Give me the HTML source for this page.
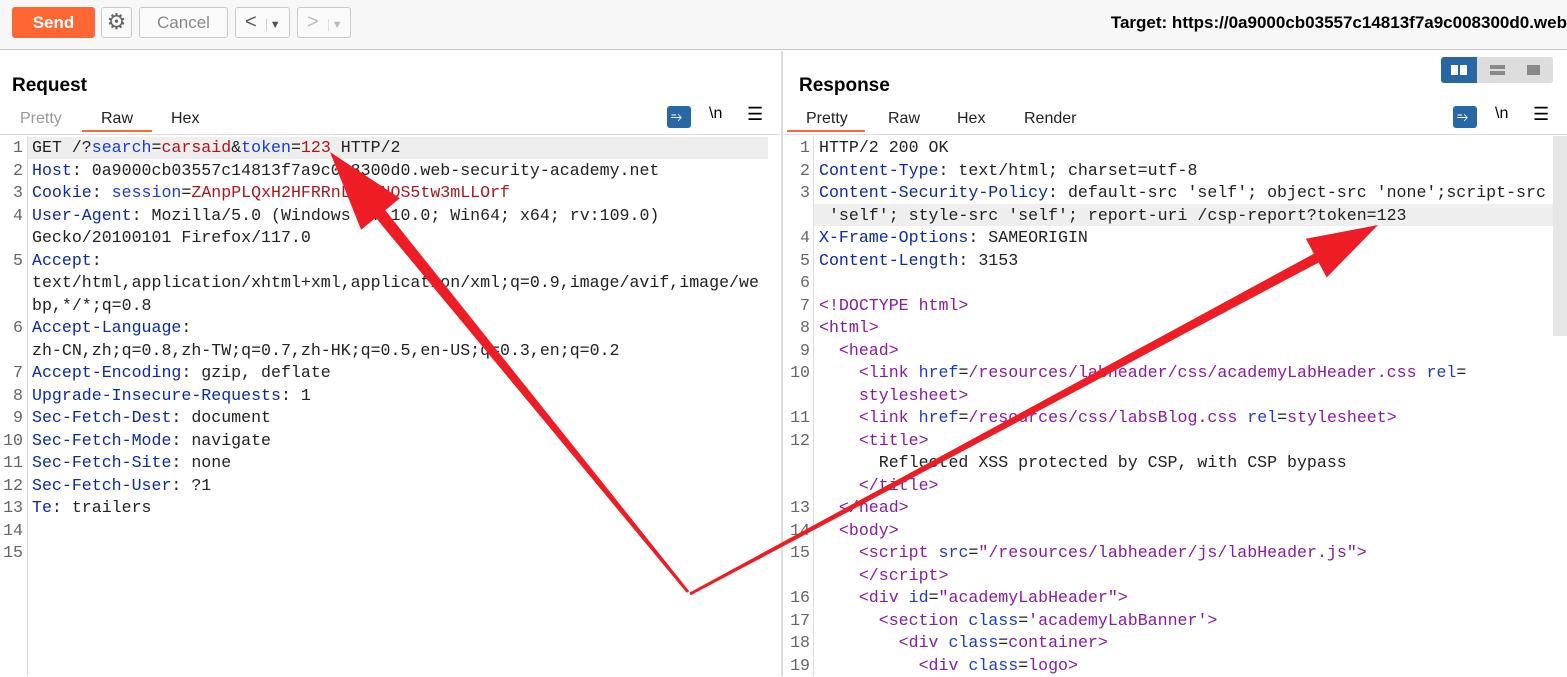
<!DOCTYPE html>
<html><head><meta charset="utf-8"><style>
*{margin:0;padding:0;box-sizing:border-box}
body{width:1567px;height:676px;overflow:hidden;background:#fff;font-family:"Liberation Sans",sans-serif;position:relative;color:#000}
.top{position:absolute;left:0;top:0;width:1567px;height:50px;background:#f7f7f7;border-bottom:1px solid #c8c4c4}
.btn{position:absolute;top:7px;height:31px;border:1px solid #c9c9c9;border-radius:3px;background:#fafafa;color:#888;font-size:17px;text-align:center;line-height:29px}
.send{left:12px;width:83px;background:#ff6633;border-color:#ff6633;color:#fff;font-weight:bold}
.target{position:absolute;right:0;top:13px;font-weight:bold;font-size:17px;white-space:nowrap}
.title{position:absolute;top:75px;font-weight:bold;font-size:19px}
.tab{position:absolute;top:110px;font-size:16px;color:#222}
.ul{position:absolute;top:130px;height:2px;background:#ff6633}
.sep{position:absolute;top:134px;height:1px;background:#ddd}
.code{position:absolute;top:137px;font-family:"Liberation Mono",monospace;font-size:16.6px;line-height:22.5px;white-space:pre;color:#222}
.num{position:absolute;top:137px;font-family:"Liberation Mono",monospace;font-size:16.6px;line-height:22.5px;white-space:pre;color:#666;text-align:right}
.b{color:#0b2aa8}.r{color:#b0151a}.p{color:#8a1aa3}.bl{color:#1a3bd6}
.hl{position:absolute;height:22px;background:#eee}
.icn{position:absolute;top:106px;width:24px;height:22px;border-radius:3px;background:#2867a3}
</style></head><body>
<div class="top">
<div class="btn send">Send</div>
<div class="btn" style="left:101px;width:31px;color:#666;font-size:22px;line-height:27px">⚙</div>
<div class="btn" style="left:139px;width:89px">Cancel</div>
<div class="btn" style="left:235px;width:55px;color:#555;text-align:left;padding-left:9px;font-size:20px">&lt;<span style="font-size:11px;margin-left:9px;border-left:1px solid #ccc;padding-left:3px">▼</span></div>
<div class="btn" style="left:297px;width:54px;color:#bbb;text-align:left;padding-left:9px;font-size:20px">&gt;<span style="font-size:11px;margin-left:9px;border-left:1px solid #ddd;padding-left:3px">▼</span></div>
<div class="target">Target: https://0a9000cb03557c14813f7a9c008300d0.web</div>
</div>
<div style="position:absolute;left:781px;top:51px;width:2px;height:625px;background:#ddd"></div>

<div class="title" style="left:12px">Request</div>
<div class="tab" style="left:20px;color:#999">Pretty</div><div class="tab" style="left:101px">Raw</div><div class="tab" style="left:171px">Hex</div>
<div class="ul" style="left:82px;width:70px"></div>
<div class="sep" style="left:0;width:780px"></div>
<div class="icn" style="left:667px"></div><div style="position:absolute;left:671px;top:108px;color:#fff;font-size:14px">⥱</div>
<div style="position:absolute;left:709px;top:105px;font-size:16px">\n</div>
<div style="position:absolute;left:747px;top:104px;font-size:18px">☰</div>

<div class="title" style="left:799px">Response</div>
<div style="position:absolute;left:1441px;top:57px;width:112px;height:26px;border-radius:3px;background:#ddd"></div>
<div style="position:absolute;left:1441px;top:57px;width:36px;height:26px;border-radius:3px 0 0 3px;background:#2867a3"></div>
<div style="position:absolute;left:1451px;top:65px;width:7px;height:10px;background:#fff"></div><div style="position:absolute;left:1460px;top:65px;width:7px;height:10px;background:#fff"></div>
<div style="position:absolute;left:1490px;top:65px;width:15px;height:4px;background:#888"></div><div style="position:absolute;left:1490px;top:71px;width:15px;height:4px;background:#888"></div>
<div style="position:absolute;left:1527px;top:65px;width:13px;height:10px;background:#888"></div>
<div class="tab" style="left:806px">Pretty</div><div class="tab" style="left:888px">Raw</div><div class="tab" style="left:957px">Hex</div><div class="tab" style="left:1024px">Render</div>
<div class="ul" style="left:787px;width:78px"></div>
<div class="sep" style="left:783px;width:784px"></div>
<div class="icn" style="left:1453px"></div><div style="position:absolute;left:1457px;top:108px;color:#fff;font-size:14px">⥱</div>
<div style="position:absolute;left:1495px;top:105px;font-size:16px">\n</div>
<div style="position:absolute;left:1533px;top:104px;font-size:18px">☰</div>

<div style="position:absolute;left:27px;top:136px;width:1px;height:540px;background:#ddd"></div>
<div style="position:absolute;left:813px;top:136px;width:1px;height:540px;background:#ddd"></div>
<div style="position:absolute;left:1553px;top:136px;width:14px;height:200px;background:#e6e6e6"></div>
<div class="hl" style="left:28px;top:137px;width:740px"></div>
<div class="hl" style="left:814px;top:204px;width:739px"></div>

<div class="num" style="left:0;width:23px">1
2
3
4

5


6

7
8
9
10
11
12
13
14
15</div>
<div class="code" style="left:32px">GET /?<span class="bl">search</span>=<span class="r">carsaid</span>&amp;<span class="bl">token</span>=<span class="r">123</span> HTTP/2
<span class="b">Host</span>: 0a9000cb03557c14813f7a9c008300d0.web-security-academy.net
<span class="b">Cookie</span>: <span class="bl">session</span>=<span class="r">ZAnpPLQxH2HFRRnLq1qNOS5tw3mLLOrf</span>
<span class="b">User-Agent</span>: Mozilla/5.0 (Windows NT 10.0; Win64; x64; rv:109.0)
Gecko/20100101 Firefox/117.0
<span class="b">Accept</span>:
text/html,application/xhtml+xml,application/xml;q=0.9,image/avif,image/we
bp,*/*;q=0.8
<span class="b">Accept-Language</span>:
zh-CN,zh;q=0.8,zh-TW;q=0.7,zh-HK;q=0.5,en-US;q=0.3,en;q=0.2
<span class="b">Accept-Encoding</span>: gzip, deflate
<span class="b">Upgrade-Insecure-Requests</span>: 1
<span class="b">Sec-Fetch-Dest</span>: document
<span class="b">Sec-Fetch-Mode</span>: navigate
<span class="b">Sec-Fetch-Site</span>: none
<span class="b">Sec-Fetch-User</span>: ?1
<span class="b">Te</span>: trailers</div>

<div class="num" style="left:783px;width:27px">1
2
3

4
5
6
7
8
9
10

11
12


13
14
15

16
17
18
19</div>
<div class="code" style="left:819px">HTTP/2 200 OK
<span class="b">Content-Type</span>: text/html; charset=utf-8
<span class="b">Content-Security-Policy</span>: default-src 'self'; object-src 'none';script-src
 'self'; style-src 'self'; report-uri /csp-report?token=123
<span class="b">X-Frame-Options</span>: SAMEORIGIN
<span class="b">Content-Length</span>: 3153

<span class="p">&lt;!DOCTYPE html&gt;</span>
<span class="p">&lt;html&gt;</span>
  <span class="p">&lt;head&gt;</span>
    <span class="p">&lt;link</span> <span class="bl">href</span>=<span class="p">/resources/labheader/css/academyLabHeader.css</span> <span class="bl">rel</span>=
    <span class="p">stylesheet&gt;</span>
    <span class="p">&lt;link</span> <span class="bl">href</span>=<span class="p">/resources/css/labsBlog.css</span> <span class="bl">rel</span>=<span class="p">stylesheet&gt;</span>
    <span class="p">&lt;title&gt;</span>
      Reflected XSS protected by CSP, with CSP bypass
    <span class="p">&lt;/title&gt;</span>
  <span class="p">&lt;/head&gt;</span>
  <span class="p">&lt;body&gt;</span>
    <span class="p">&lt;script</span> <span class="bl">src</span>=<span class="p">"/resources/labheader/js/labHeader.js"&gt;</span>
    <span class="p">&lt;/script&gt;</span>
    <span class="p">&lt;div</span> <span class="bl">id</span>=<span class="p">"academyLabHeader"&gt;</span>
      <span class="p">&lt;section</span> <span class="bl">class</span>=<span class="p">'academyLabBanner'&gt;</span>
        <span class="p">&lt;div</span> <span class="bl">class</span>=<span class="p">container&gt;</span>
          <span class="p">&lt;div</span> <span class="bl">class</span>=<span class="p">logo&gt;</span></div>

<svg style="position:absolute;left:0;top:0" width="1567" height="676">
<polygon fill="#ee1c25" points="689.2,591.1 686.8,592.9 375.8,217.8 361.1,229.8 330,152 399.9,198.2 385.2,210.2"/>
<polygon fill="#ee1c25" points="690.7,595.3 689.3,592.7 1313.9,253.7 1305.9,238.7 1378,225 1326.7,277.5 1318.7,262.5"/>
</svg>
</body></html>
